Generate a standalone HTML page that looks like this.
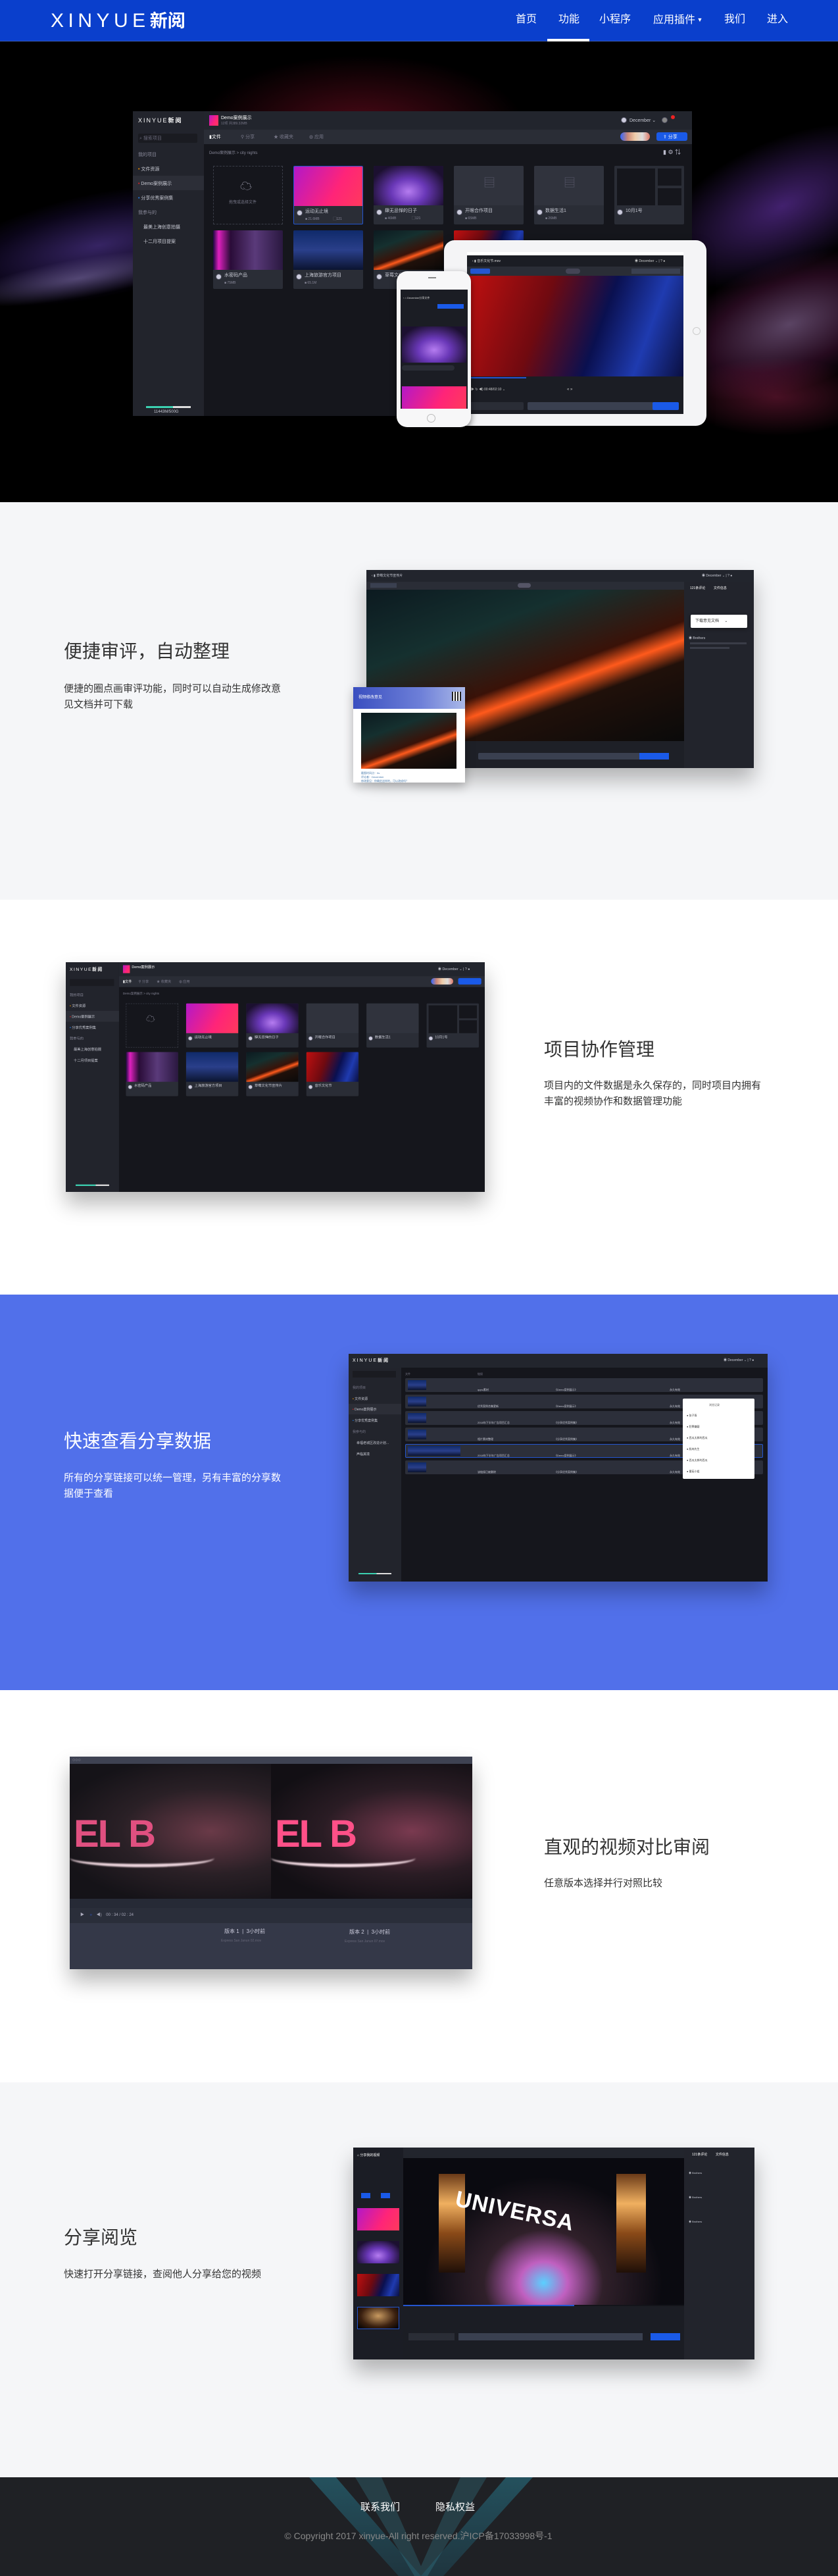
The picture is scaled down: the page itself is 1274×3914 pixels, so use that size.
<!DOCTYPE html>
<html><head><meta charset="utf-8">
<style>
*{margin:0;padding:0;box-sizing:border-box}
body{width:1274px;height:3914px;position:relative;overflow:hidden;font-family:"Liberation Sans","Noto Sans CJK SC",sans-serif;background:#fff}
.abs{position:absolute}
.hdr{left:0;top:0;width:1274px;height:63px;background:#0a3fcc;border-bottom:1px solid #3b5bb8}
.logo{left:77px;top:13px;color:#fff;font-size:30px;letter-spacing:6.5px;font-weight:400;line-height:38px}
.logo span{letter-spacing:0;font-size:27px;font-weight:700}
.nav{top:18px;color:#fff;font-size:16px;line-height:24px}
.ul{left:832px;top:59px;width:64px;height:4px;background:#fff}
.hero{left:0;top:63px;width:1274px;height:700px;background:#000;overflow:hidden}
.sec{left:0;width:1274px;overflow:hidden}
h2{position:absolute;font-weight:400;font-size:28px;color:#333;line-height:36px}
.p{position:absolute;font-size:15px;color:#333;line-height:24px}
.shadow{box-shadow:0 18px 30px rgba(0,0,0,.28)}
.app{background:#15161c;overflow:hidden;font-size:7px;color:#aab}
.side{left:0;top:0;bottom:0;width:108px;background:#22242c}
.t{position:absolute;white-space:nowrap;color:#c8cad4;font-size:7px;line-height:9px}
.card{position:absolute;width:106px;height:89px;background:#2a2d36;border-radius:2px;overflow:hidden}
.card .im{position:absolute;left:0;top:0;width:106px;height:60px}
.av{position:absolute;width:9px;height:9px;border-radius:50%;background:#ccd;border:1px solid #556}
.g1{background:linear-gradient(120deg,#b318c8 0%,#ff2478 60%,#ff3a5c 100%)}
.g2{background:radial-gradient(ellipse at 50% 65%,#b57cf0 0%,#6a38b8 35%,#1c1030 80%)}
.g3{background:linear-gradient(180deg,#0f2a6a,#2a3f8a 50%,#0b1430)}
.g4{background:linear-gradient(160deg,#0c1a20 0%,#15302f 30%,#3a1208 55%,#ff5a1c 62%,#20100a 70%,#0a0a0a)}
.g5{background:linear-gradient(90deg,#1a0840 0%,#e020c0 8%,#2a0c38 25%,#5a3a7a 60%,#2a1840)}
.g6{background:linear-gradient(110deg,#c01010 0%,#700a10 35%,#0a1050 60%,#1f3bb0 80%,#0a0f40)}
</style></head><body>

<div class="abs hdr"></div>
<div class="abs logo">XINYUE<span>新阅</span></div>
<div class="abs nav" style="left:784px">首页</div>
<div class="abs nav" style="left:849px">功能</div>
<div class="abs nav" style="left:911px">小程序</div>
<div class="abs nav" style="left:993px">应用插件<span style="font-size:9px;vertical-align:2px"> ▼</span></div>
<div class="abs nav" style="left:1101px">我们</div>
<div class="abs nav" style="left:1166px">进入</div>
<div class="abs ul"></div>

<div class="abs hero">
  <div class="abs" style="left:-100px;top:230px;width:500px;height:160px;border-radius:50%;background:radial-gradient(ellipse,rgba(120,80,220,.45),rgba(60,30,140,.18) 50%,transparent 70%);transform:rotate(-12deg)"></div>
  <div class="abs" style="left:-60px;top:330px;width:360px;height:60px;border-radius:50%;background:radial-gradient(ellipse,rgba(200,180,255,.35),transparent 70%);transform:rotate(-10deg)"></div>
  <div class="abs" style="left:300px;top:20px;width:500px;height:220px;border-radius:50%;background:radial-gradient(ellipse,rgba(170,20,50,.45),transparent 70%)"></div>
  <div class="abs" style="left:980px;top:150px;width:420px;height:200px;border-radius:50%;background:radial-gradient(ellipse,rgba(120,60,200,.55),transparent 70%);transform:rotate(-25deg)"></div>
  <div class="abs" style="left:1000px;top:330px;width:400px;height:200px;border-radius:50%;background:radial-gradient(ellipse,rgba(200,150,220,.45),rgba(150,40,120,.25) 45%,transparent 70%);transform:rotate(-20deg)"></div>
  <div class="abs" style="left:1030px;top:480px;width:300px;height:120px;border-radius:50%;background:radial-gradient(ellipse,rgba(180,40,90,.4),transparent 70%)"></div>
</div>

<div id="desk" class="abs app" style="left:202px;top:169px;width:850px;height:463px">
  <div class="abs side"></div>
  <div class="abs" style="left:108px;top:0;right:0;height:28px;background:#22252d"></div>
  <div class="abs" style="left:108px;top:28px;right:0;height:22px;background:#2a2d36"></div>
  <div class="t" style="left:8px;top:10px;font-size:9px;letter-spacing:2px;color:#fff">XINYUE<b>新阅</b></div>
  <div class="abs" style="left:8px;top:34px;width:90px;height:14px;background:#1a1b21;border-radius:2px"></div>
  <div class="t" style="left:10px;top:37px;color:#667">⌕ 搜索项目</div>
  <div class="t" style="left:8px;top:62px;color:#889">我的项目</div>
  <div class="t" style="left:8px;top:84px"><span style="color:#f90">•</span> 文件资源</div>
  <div class="abs" style="left:0;top:98px;width:108px;height:22px;background:#2c2e37"></div>
  <div class="t" style="left:8px;top:106px"><span style="color:#e22">•</span> Demo案例展示</div>
  <div class="t" style="left:8px;top:128px"><span style="color:#28f">•</span> 分享优秀案例集</div>
  <div class="t" style="left:8px;top:150px;color:#889">我参与的</div>
  <div class="t" style="left:16px;top:172px">最美上海创意拍摄</div>
  <div class="t" style="left:16px;top:194px">十二月项目提案</div>
  <div class="abs" style="left:20px;top:448px;width:68px;height:3px;background:linear-gradient(90deg,#3cd0b0 60%,#ddd 60%)"></div>
  <div class="t" style="left:32px;top:453px;font-size:6px">11443M/500G</div>
  <div class="abs g1" style="left:116px;top:6px;width:14px;height:16px"></div>
  <div class="t" style="left:134px;top:6px;color:#fff">Demo案例展示</div>
  <div class="t" style="left:134px;top:15px;color:#778;font-size:5px">12项 共389.32MB</div>
  <div class="av" style="left:742px;top:9px"></div>
  <div class="t" style="left:755px;top:10px">December ⌄</div>
  <div class="av" style="left:804px;top:9px;background:#888"></div>
  <div class="abs" style="left:818px;top:6px;width:6px;height:6px;border-radius:50%;background:#e22"></div>
  <div class="t" style="left:116px;top:35px;color:#fff">▮文件</div>
  <div class="t" style="left:164px;top:35px;color:#778">⚲ 分享</div>
  <div class="t" style="left:214px;top:35px;color:#778">★ 收藏夹</div>
  <div class="t" style="left:268px;top:35px;color:#778">◍ 应用</div>
  <div class="abs" style="left:741px;top:32px;width:45px;height:13px;border-radius:7px;background:linear-gradient(90deg,#36f,#c87,#eca,#ddd,#d76)"></div>
  <div class="abs" style="left:796px;top:32px;width:47px;height:13px;border-radius:3px;background:#1a5ae8"></div>
  <div class="t" style="left:806px;top:35px;color:#fff">⇪ 分享</div>
  <div class="t" style="left:116px;top:60px;color:#889;font-size:6px">Demo案例展示 &gt; city nights</div>
  <div class="t" style="left:806px;top:58px;color:#bbc;font-size:9px">▮ ⚙ ⇅</div>
  <div class="abs" style="left:122px;top:83px;width:106px;height:89px;border:1px dashed #3a3d48"></div>
  <div class="t" style="left:163px;top:110px;font-size:18px;color:#99a">☁</div>
  <div class="t" style="left:146px;top:135px;color:#778;font-size:6px">拖曳或选择文件</div>
  <div class="card" style="left:244px;top:83px;border:1px solid #2456d0"><div class="im g1"></div><div class="av" style="left:4px;top:66px"></div><div class="t" style="left:17px;top:64px">运动无止境</div><div class="t" style="left:17px;top:76px;color:#889;font-size:5px">■ 21.6MB &nbsp;&nbsp;&nbsp;&nbsp;&nbsp;&nbsp;&nbsp;&nbsp;&nbsp;&nbsp;&nbsp;&nbsp;&nbsp; ▢121</div></div>
  <div class="card" style="left:366px;top:83px"><div class="im g2"></div><div class="av" style="left:4px;top:66px"></div><div class="t" style="left:17px;top:64px">肆无忌惮的日子</div><div class="t" style="left:17px;top:76px;color:#889;font-size:5px">■ 46MB &nbsp;&nbsp;&nbsp;&nbsp;&nbsp;&nbsp;&nbsp;&nbsp;&nbsp;&nbsp;&nbsp;&nbsp;&nbsp;&nbsp;&nbsp; ▢121</div></div>
  <div class="card" style="left:488px;top:83px"><div class="im" style="background:#30333d"></div><div class="t" style="left:45px;top:22px;font-size:18px;color:#556">▤</div><div class="av" style="left:4px;top:66px"></div><div class="t" style="left:17px;top:64px">开眼合作项目</div><div class="t" style="left:17px;top:76px;color:#889;font-size:5px">■ 65MB</div></div>
  <div class="card" style="left:610px;top:83px"><div class="im" style="background:#30333d"></div><div class="t" style="left:45px;top:22px;font-size:18px;color:#556">▤</div><div class="av" style="left:4px;top:66px"></div><div class="t" style="left:17px;top:64px">数据生活1</div><div class="t" style="left:17px;top:76px;color:#889;font-size:5px">■ 26MB</div></div>
  <div class="card" style="left:732px;top:83px"><div class="im" style="background:#2a2d36"></div><div class="abs" style="left:4px;top:4px;width:58px;height:56px;background:#15161c"></div><div class="abs" style="left:66px;top:4px;width:36px;height:26px;background:#15161c"></div><div class="abs" style="left:66px;top:34px;width:36px;height:26px;background:#15161c"></div><div class="av" style="left:4px;top:66px"></div><div class="t" style="left:17px;top:64px">10月1号</div></div>
  <div class="card" style="left:122px;top:181px"><div class="im g5"></div><div class="av" style="left:4px;top:66px"></div><div class="t" style="left:17px;top:64px">水密码产品</div><div class="t" style="left:17px;top:76px;color:#889;font-size:5px">■ 75MB</div></div>
  <div class="card" style="left:244px;top:181px"><div class="im g3"></div><div class="av" style="left:4px;top:66px"></div><div class="t" style="left:17px;top:64px">上海旅游官方项目</div><div class="t" style="left:17px;top:76px;color:#889;font-size:5px">■ 65.1M</div></div>
  <div class="card" style="left:366px;top:181px"><div class="im g4"></div><div class="av" style="left:4px;top:66px"></div><div class="t" style="left:17px;top:64px">草莓文化节宣传片</div></div>
  <div class="card" style="left:488px;top:181px"><div class="im g6"></div><div class="av" style="left:4px;top:66px"></div><div class="t" style="left:17px;top:64px">音乐文化节</div></div>
</div>

<div class="abs" style="left:675px;top:365px;width:399px;height:282px;background:#f4f4f6;border-radius:16px;box-shadow:0 4px 12px rgba(0,0,0,.5)"></div>
<div class="abs" style="left:1053px;top:497px;width:12px;height:12px;border-radius:50%;border:1px solid #ccc"></div>
<div class="abs app" style="left:710px;top:383px;width:329px;height:246px;background:#1b1d24">
  <div class="abs" style="left:0;top:0;right:0;height:5px;background:#fff"></div>
  <div class="t" style="left:8px;top:10px;color:#ddd;font-size:5px">‹ ▮ 音乐文化节.mov</div>
  <div class="t" style="left:255px;top:10px;color:#ccc;font-size:5px">◉ December ⌄ | ? ●</div>
  <div class="abs" style="left:0;top:22px;right:0;height:14px;background:#2a2d36"></div>
  <div class="abs" style="left:5px;top:25px;width:30px;height:8px;background:#2456d0;border-radius:2px"></div>
  <div class="abs" style="left:150px;top:25px;width:22px;height:8px;background:#445;border-radius:4px"></div>
  <div class="abs" style="left:250px;top:25px;width:74px;height:8px;background:#3a4050"></div>
  <div class="abs g6" style="left:0;top:36px;width:329px;height:153px"></div>
  <div class="abs" style="left:0;top:190px;width:90px;height:2px;background:#2456d0"></div>
  <div class="t" style="left:6px;top:205px;color:#ccc;font-size:5px">▶ ↻ ◀) 00:48/02:10 ⌄</div>
  <div class="t" style="left:152px;top:205px;color:#ccc;font-size:6px">« »</div>
  <div class="abs" style="left:4px;top:228px;width:82px;height:12px;background:#2a2d36;border-radius:2px"></div>
  <div class="abs" style="left:92px;top:228px;width:230px;height:12px;background:#3a4050;border-radius:2px"></div>
  <div class="abs" style="left:282px;top:228px;width:40px;height:12px;background:#1a5ae8;border-radius:2px"></div>
</div>
<div class="abs" style="left:603px;top:412px;width:113px;height:237px;background:#f7f7f8;border-radius:16px;box-shadow:0 4px 10px rgba(0,0,0,.5)"></div>
<div class="abs" style="left:649px;top:629px;width:13px;height:13px;border-radius:50%;border:1px solid #bbb"></div>
<div class="abs" style="left:651px;top:421px;width:12px;height:2px;background:#888"></div>
<div class="abs app" style="left:609px;top:440px;width:102px;height:181px;background:#1b1d24">
  <div class="t" style="left:4px;top:8px;color:#ddd;font-size:4px">‹ ⌂ December分享文件</div>
  <div class="abs" style="left:56px;top:22px;width:40px;height:7px;background:#1a5ae8"></div>
  <div class="abs g2" style="left:2px;top:56px;width:98px;height:55px"></div>
  <div class="abs" style="left:2px;top:115px;width:80px;height:8px;background:#2a2d36;border-radius:4px"></div>
  <div class="abs g1" style="left:2px;top:147px;width:98px;height:34px"></div>
</div>

<div class="abs sec" style="top:763px;height:604px;background:#f5f6f8"></div>
<h2 style="left:97px;top:972px">便捷审评，自动整理</h2>
<div class="p" style="left:97px;top:1035px;width:340px">便捷的圈点画审评功能，同时可以自动生成修改意见文档并可下载</div>
<div class="abs app shadow" style="left:557px;top:866px;width:589px;height:301px;background:#1b1d24">
  <div class="abs" style="left:0;top:0;right:0;height:18px;background:#22252d"></div>
  <div class="t" style="left:8px;top:5px;font-size:5px">‹ ▮ 草莓文化节宣传片</div>
  <div class="t" style="left:510px;top:5px;font-size:5px">◉ December ⌄ | ? ●</div>
  <div class="abs" style="left:0;top:18px;width:483px;height:12px;background:#2a2d36"></div>
  <div class="abs" style="left:6px;top:20px;width:40px;height:7px;background:#3a4050"></div>
  <div class="abs" style="left:230px;top:20px;width:20px;height:7px;background:#556;border-radius:4px"></div>
  <div class="abs g4" style="left:0;top:30px;width:483px;height:230px"></div>
  <div class="abs" style="left:0;top:260px;width:483px;height:41px;background:#1e2027"></div>
  <div class="abs" style="left:170px;top:278px;width:280px;height:10px;background:#3a4050;border-radius:2px"></div>
  <div class="abs" style="left:415px;top:278px;width:45px;height:10px;background:#1a5ae8"></div>
  <div class="abs" style="left:483px;top:18px;width:106px;height:283px;background:#22242c"></div>
  <div class="t" style="left:492px;top:24px;font-size:5px;color:#fff">121条评论 &nbsp;&nbsp;&nbsp;&nbsp;&nbsp;&nbsp;&nbsp; 文件信息</div>
  <div class="abs" style="left:493px;top:68px;width:86px;height:20px;background:#fff;border-radius:2px;box-shadow:0 2px 6px rgba(0,0,0,.4)"></div>
  <div class="t" style="left:500px;top:74px;font-size:6px;color:#333">下载意见文档 &nbsp;&nbsp;&nbsp;&nbsp;⌄</div>
  <div class="t" style="left:490px;top:100px;font-size:5px">◉ Brothers</div>
  <div class="abs" style="left:492px;top:110px;width:86px;height:3px;background:#3a3d48"></div>
  <div class="abs" style="left:492px;top:117px;width:60px;height:3px;background:#3a3d48"></div>
</div>
<div class="abs" style="left:537px;top:1044px;width:170px;height:145px;background:#fff;box-shadow:0 6px 14px rgba(0,0,0,.25)">
  <div class="abs" style="left:0;top:0;width:170px;height:33px;background:linear-gradient(90deg,#3a4fc0,#6d7fd8 60%,#aab8e8)"></div>
  <div class="t" style="left:8px;top:12px;color:#fff;font-size:6px">视频修改意见</div>
  <div class="abs" style="left:150px;top:7px;width:14px;height:14px;background:repeating-linear-gradient(90deg,#222 0 2px,#fff 2px 4px)"></div>
  <div class="abs g4" style="left:12px;top:39px;width:145px;height:85px"></div>
  <div class="t" style="left:12px;top:128px;color:#47a;font-size:4px;line-height:6px">截图时间点：0s<br>评论者：December<br>修改意见：你确定这样的，可以改成吗？</div>
</div>

<div class="abs sec" style="top:1367px;height:600px;background:#fff"></div>
<div id="desk2" class="abs shadow" style="left:100px;top:1462px;width:637px;height:349px;overflow:hidden">
  <div class="abs app" style="left:0;top:0;width:850px;height:463px;transform:scale(.7494,.7538);transform-origin:0 0">
    <div class="abs side"></div>
    <div class="abs" style="left:108px;top:0;right:0;height:28px;background:#22252d"></div>
    <div class="abs" style="left:108px;top:28px;right:0;height:22px;background:#2a2d36"></div>
    <div class="t" style="left:8px;top:10px;font-size:9px;letter-spacing:2px;color:#fff">XINYUE<b>新阅</b></div>
    <div class="abs" style="left:8px;top:34px;width:90px;height:14px;background:#1a1b21"></div>
    <div class="t" style="left:8px;top:62px;color:#889">我的项目</div>
    <div class="t" style="left:8px;top:84px"><span style="color:#f90">•</span> 文件资源</div>
    <div class="abs" style="left:0;top:98px;width:108px;height:22px;background:#2c2e37"></div>
    <div class="t" style="left:8px;top:106px"><span style="color:#e22">•</span> Demo案例展示</div>
    <div class="t" style="left:8px;top:128px"><span style="color:#28f">•</span> 分享优秀案例集</div>
    <div class="t" style="left:8px;top:150px;color:#889">我参与的</div>
    <div class="t" style="left:16px;top:172px">最美上海创意拍摄</div>
    <div class="t" style="left:16px;top:194px">十二月项目提案</div>
    <div class="abs" style="left:20px;top:448px;width:68px;height:3px;background:linear-gradient(90deg,#3cd0b0 60%,#ddd 60%)"></div>
    <div class="abs g1" style="left:116px;top:6px;width:14px;height:16px"></div>
    <div class="t" style="left:134px;top:6px;color:#fff">Demo案例展示</div>
    <div class="t" style="left:755px;top:10px">◉ December ⌄ | ? ●</div>
    <div class="t" style="left:116px;top:35px;color:#fff">▮文件 &nbsp;&nbsp;&nbsp;&nbsp;&nbsp;&nbsp;<span style="color:#778">⚲ 分享 &nbsp;&nbsp;&nbsp;&nbsp;&nbsp;&nbsp; ★ 收藏夹 &nbsp;&nbsp;&nbsp;&nbsp;&nbsp;&nbsp; ◍ 应用</span></div>
    <div class="abs" style="left:741px;top:32px;width:45px;height:13px;border-radius:7px;background:linear-gradient(90deg,#36f,#c87,#eca,#ddd,#d76)"></div>
    <div class="abs" style="left:796px;top:32px;width:47px;height:13px;border-radius:3px;background:#1a5ae8"></div>
    <div class="t" style="left:116px;top:60px;color:#889;font-size:6px">Demo案例展示 &gt; city nights</div>
    <div class="abs" style="left:122px;top:83px;width:106px;height:89px;border:1px dashed #3a3d48"></div>
    <div class="t" style="left:163px;top:110px;font-size:18px;color:#99a">☁</div>
    <div class="card" style="left:244px;top:83px"><div class="im g1"></div><div class="av" style="left:4px;top:66px"></div><div class="t" style="left:17px;top:64px">运动无止境</div></div>
    <div class="card" style="left:366px;top:83px"><div class="im g2"></div><div class="av" style="left:4px;top:66px"></div><div class="t" style="left:17px;top:64px">肆无忌惮的日子</div></div>
    <div class="card" style="left:488px;top:83px"><div class="im" style="background:#30333d"></div><div class="av" style="left:4px;top:66px"></div><div class="t" style="left:17px;top:64px">开眼合作项目</div></div>
    <div class="card" style="left:610px;top:83px"><div class="im" style="background:#30333d"></div><div class="av" style="left:4px;top:66px"></div><div class="t" style="left:17px;top:64px">数据生活1</div></div>
    <div class="card" style="left:732px;top:83px"><div class="abs" style="left:4px;top:4px;width:58px;height:56px;background:#15161c"></div><div class="abs" style="left:66px;top:4px;width:36px;height:26px;background:#15161c"></div><div class="abs" style="left:66px;top:34px;width:36px;height:26px;background:#15161c"></div><div class="av" style="left:4px;top:66px"></div><div class="t" style="left:17px;top:64px">10月1号</div></div>
    <div class="card" style="left:122px;top:181px"><div class="im g5"></div><div class="av" style="left:4px;top:66px"></div><div class="t" style="left:17px;top:64px">水密码产品</div></div>
    <div class="card" style="left:244px;top:181px"><div class="im g3"></div><div class="av" style="left:4px;top:66px"></div><div class="t" style="left:17px;top:64px">上海旅游官方项目</div></div>
    <div class="card" style="left:366px;top:181px"><div class="im g4"></div><div class="av" style="left:4px;top:66px"></div><div class="t" style="left:17px;top:64px">草莓文化节宣传片</div></div>
    <div class="card" style="left:488px;top:181px"><div class="im g6"></div><div class="av" style="left:4px;top:66px"></div><div class="t" style="left:17px;top:64px">音乐文化节</div></div>
  </div>
</div>
<h2 style="left:827px;top:1577px">项目协作管理</h2>
<div class="p" style="left:827px;top:1638px;width:340px">项目内的文件数据是永久保存的，同时项目内拥有丰富的视频协作和数据管理功能</div>

<div class="abs sec" style="top:1967px;height:601px;background:#5170ea"></div>
<h2 style="left:97px;top:2172px;color:#fff">快速查看分享数据</h2>
<div class="p" style="left:97px;top:2234px;width:340px;color:#fff">所有的分享链接可以统一管理，另有丰富的分享数据便于查看</div>
<div class="abs app shadow" style="left:530px;top:2057px;width:637px;height:346px">
  <div class="abs" style="left:0;top:0;width:80px;bottom:0;background:#22242c"></div>
  <div class="abs" style="left:80px;top:0;right:0;height:21px;background:#22252d"></div>
  <div class="abs" style="left:0;top:0;width:80px;height:21px;background:#22252d"></div>
  <div class="t" style="left:6px;top:6px;font-size:7px;letter-spacing:2px;color:#fff">XINYUE<b>新阅</b></div>
  <div class="t" style="left:570px;top:6px;font-size:5px">◉ December ⌄ | ? ●</div>
  <div class="abs" style="left:6px;top:26px;width:66px;height:10px;background:#1a1b21"></div>
  <div class="t" style="left:6px;top:48px;font-size:5px;color:#778">我的项目</div>
  <div class="t" style="left:6px;top:65px;font-size:5px"><span style="color:#f90">•</span> 文件资源</div>
  <div class="abs" style="left:0;top:76px;width:80px;height:16px;background:#2c2e37"></div>
  <div class="t" style="left:6px;top:81px;font-size:5px"><span style="color:#e22">•</span> Demo案例展示</div>
  <div class="t" style="left:6px;top:98px;font-size:5px"><span style="color:#28f">•</span> 分享优秀案例集</div>
  <div class="t" style="left:6px;top:115px;font-size:5px;color:#778">我参与的</div>
  <div class="t" style="left:12px;top:132px;font-size:5px">幸福老城区改造计划...</div>
  <div class="t" style="left:12px;top:149px;font-size:5px">声临其境</div>
  <div class="abs" style="left:15px;top:333px;width:50px;height:2px;background:linear-gradient(90deg,#3cd0b0 55%,#ddd 55%)"></div>
  <div class="t" style="left:86px;top:26px;font-size:4px;color:#778">文件</div>
  <div class="t" style="left:196px;top:26px;font-size:4px;color:#778">链接</div>
  <div class="abs" style="left:86px;top:37px;width:544px;height:21px;background:#2c2f3a;border-radius:2px"></div>
  <div class="abs" style="left:86px;top:62px;width:544px;height:21px;background:#2c2f3a;border-radius:2px"></div>
  <div class="abs" style="left:86px;top:87px;width:544px;height:21px;background:#2c2f3a;border-radius:2px"></div>
  <div class="abs" style="left:86px;top:112px;width:544px;height:21px;background:#2c2f3a;border-radius:2px"></div>
  <div class="abs" style="left:86px;top:137px;width:544px;height:21px;background:#2c2f3a;border-radius:2px;border:1px solid #2456d0"></div>
  <div class="abs" style="left:86px;top:162px;width:544px;height:21px;background:#2c2f3a;border-radius:2px"></div>
  <div class="abs g3" style="left:90px;top:40px;width:28px;height:15px"></div>
  <div class="abs g3" style="left:90px;top:65px;width:28px;height:15px"></div>
  <div class="abs g3" style="left:90px;top:90px;width:28px;height:15px"></div>
  <div class="abs g3" style="left:90px;top:115px;width:28px;height:15px"></div>
  <div class="abs g3" style="left:90px;top:140px;width:80px;height:15px"></div>
  <div class="abs g3" style="left:90px;top:165px;width:28px;height:15px"></div>
  <div class="t" style="left:196px;top:42px;font-size:4px;line-height:25px">qqnu素材<br>优秀案例合集更新<br>2018年下半年广告项目汇总<br>相片素材整理<br>2018年下半年广告项目汇总<br>该链接已被删除</div>
  <div class="t" style="left:313px;top:42px;font-size:4px;line-height:25px">《Demo案例展示》<br>《Demo案例展示》<br>《分享优秀案例集》<br>《分享优秀案例集》<br>《Demo案例展示》<br>《分享优秀案例集》</div>
  <div class="t" style="left:488px;top:42px;font-size:4px;line-height:25px">永久有效<br>永久有效<br>永久有效<br>永久有效<br>永久有效<br>永久有效</div>
  <div class="abs" style="left:508px;top:68px;width:109px;height:122px;background:#fff;border-radius:2px"></div>
  <div class="t" style="left:548px;top:73px;font-size:4px;color:#555">浏览记录</div>
  <div class="t" style="left:514px;top:85px;font-size:4px;color:#333;line-height:17px">● 张子胥<br>● 犯罪嫌疑<br>● 西瓜太郎的西瓜<br>● 肌肉先生<br>● 西瓜太郎的西瓜<br>● 番茄小姐</div>
</div>

<div class="abs sec" style="top:2568px;height:598px;background:#fff"></div>
<div class="abs shadow" style="left:106px;top:2669px;width:612px;height:323px;background:#343848;overflow:hidden">
  <div class="abs" style="left:0;top:0;width:612px;height:11px;background:#3e4252"></div>
  <div class="t" style="left:4px;top:1px;color:#99a;font-size:7px">○○○</div>
  <div class="abs" style="left:0;top:11px;width:306px;height:205px;background:radial-gradient(ellipse at 70% 50%,#6a3a48 0%,#2a2026 45%,#151318 80%)"></div>
  <div class="abs" style="left:306px;top:11px;width:306px;height:205px;background:radial-gradient(ellipse at 70% 50%,#7a3a50 0%,#2a1c24 45%,#120f14 80%)"></div>
  <div class="abs" style="left:0;top:140px;width:220px;height:28px;border-radius:50%;border-bottom:5px solid #f0d8e0;filter:blur(1px)"></div>
  <div class="abs" style="left:306px;top:140px;width:220px;height:28px;border-radius:50%;border-bottom:5px solid #f8e0e8;filter:blur(1px)"></div>
  <div class="t" style="left:6px;top:88px;font-size:58px;line-height:60px;color:#e05080;font-weight:700;letter-spacing:-2px">EL B</div>
  <div class="t" style="left:312px;top:88px;font-size:58px;line-height:60px;color:#ff5088;font-weight:700;letter-spacing:-2px">EL B</div>
  <div class="abs" style="left:0;top:216px;width:612px;height:14px;background:#262a36"></div>
  <div class="abs" style="left:0;top:230px;width:612px;height:23px;background:#2a2e3a"></div>
  <div class="t" style="left:16px;top:237px;color:#aab;font-size:6px">▶ &nbsp;&nbsp;&nbsp;&nbsp;<span style="color:#36f">○</span> &nbsp;&nbsp;&nbsp;◀) &nbsp;&nbsp; 00 : 34 / 02 : 24</div>
  <div class="t" style="left:235px;top:261px;color:#ccd;font-size:8px">版本 1 &nbsp;| &nbsp;3小时前</div>
  <div class="t" style="left:230px;top:276px;color:#667;font-size:5px">Express San Janun 02.mov</div>
</div>
<div class="t" style="left:531px;top:2931px;color:#ccd;font-size:8px">版本 2 &nbsp;| &nbsp;3小时前</div>
<div class="t" style="left:524px;top:2946px;color:#667;font-size:5px">Express San Janun 07.mov</div>
<h2 style="left:827px;top:2789px">直观的视频对比审阅</h2>
<div class="p" style="left:827px;top:2850px">任意版本选择并行对照比较</div>

<div class="abs sec" style="top:3164px;height:600px;background:#f5f6f8"></div>
<h2 style="left:97px;top:3382px">分享阅览</h2>
<div class="p" style="left:97px;top:3444px">快速打开分享链接，查阅他人分享给您的视频</div>
<div class="abs app shadow" style="left:537px;top:3263px;width:610px;height:322px;background:#13141a">
  <div class="abs" style="left:0;top:0;width:76px;bottom:0;background:#1b1d25"></div>
  <div class="t" style="left:6px;top:8px;font-size:5px;color:#fff">⌂ 分享我的视频</div>
  <div class="abs" style="left:12px;top:69px;width:14px;height:8px;background:#1a5ae8"></div>
  <div class="abs" style="left:42px;top:69px;width:14px;height:8px;background:#1a5ae8"></div>
  <div class="abs g1" style="left:6px;top:92px;width:64px;height:34px"></div>
  <div class="abs g2" style="left:6px;top:142px;width:64px;height:34px"></div>
  <div class="abs g6" style="left:6px;top:192px;width:64px;height:34px"></div>
  <div class="abs" style="left:6px;top:242px;width:64px;height:34px;border:1px solid #2456d0;background:radial-gradient(ellipse at 50% 40%,#c89a60,#3a2010 60%,#000)"></div>
  <div class="abs" style="left:76px;top:0;width:427px;height:16px;background:#22252d"></div>
  <div class="abs" style="left:76px;top:16px;width:427px;height:223px;background:radial-gradient(ellipse at 50% 85%,#5ad0ff 0%,#c060c0 12%,#30202a 30%,#0a0a10 60%),#000"></div>
  <div class="abs" style="left:130px;top:40px;width:40px;height:150px;background:linear-gradient(180deg,#6a3a18,#f0b060 30%,#8a4a18 60%,#201008)"></div>
  <div class="abs" style="left:400px;top:40px;width:45px;height:150px;background:linear-gradient(180deg,#6a3a18,#f0b060 30%,#8a4a18 60%,#201008)"></div>
  <div class="t" style="left:160px;top:58px;font-size:34px;line-height:40px;color:#fff;font-weight:700;transform:rotate(12deg);transform-origin:0 0;letter-spacing:1px">UNIVERSA</div>
  <div class="abs" style="left:76px;top:239px;width:260px;height:2px;background:#2456d0"></div>
  <div class="abs" style="left:76px;top:241px;width:427px;height:81px;background:#1b1d24"></div>
  <div class="abs" style="left:84px;top:282px;width:70px;height:11px;background:#2a2d36"></div>
  <div class="abs" style="left:160px;top:282px;width:280px;height:11px;background:#3a4050"></div>
  <div class="abs" style="left:452px;top:282px;width:45px;height:11px;background:#1a5ae8"></div>
  <div class="abs" style="left:503px;top:0;width:107px;height:322px;background:#22242c"></div>
  <div class="t" style="left:515px;top:7px;font-size:5px;color:#fff">121条评论 &nbsp;&nbsp;&nbsp;&nbsp;&nbsp;&nbsp;&nbsp; 文件信息</div>
  <div class="t" style="left:510px;top:34px;font-size:4px">◉ Brothers</div>
  <div class="t" style="left:510px;top:71px;font-size:4px">◉ Brothers</div>
  <div class="t" style="left:510px;top:108px;font-size:4px">◉ Brothers</div>
</div>

<div class="abs sec" style="top:3764px;height:150px;background:#1f2125">
  <div class="abs" style="left:470px;top:0;width:340px;height:150px;clip-path:polygon(0 0,12% 0,50% 100%,88% 0,100% 0,60% 100%,40% 100%);background:linear-gradient(180deg,rgba(40,120,140,.55),rgba(30,90,110,.35))"></div>
  <div class="abs" style="left:540px;top:0;width:200px;height:150px;clip-path:polygon(0 0,20% 0,50% 90%,80% 0,100% 0,55% 100%,45% 100%);background:rgba(60,150,170,.25)"></div>
</div>
<div class="abs" style="left:548px;top:3798px;color:#fff;font-size:15px">联系我们</div>
<div class="abs" style="left:662px;top:3798px;color:#fff;font-size:15px">隐私权益</div>
<div class="abs" style="left:398px;top:3843px;width:476px;text-align:center;color:#888;font-size:14px">© Copyright 2017 xinyue-All right reserved.沪ICP备17033998号-1</div>
</body></html>
